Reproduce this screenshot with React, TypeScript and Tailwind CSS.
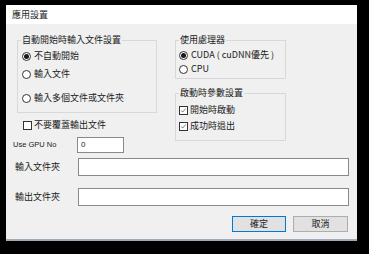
import type { ReactNode } from 'react'

const cjk = "font-['Noto_Sans_CJK_TC','Noto_Sans_CJK_SC',sans-serif]"

function Radio({ checked, children }: { checked?: boolean; children: ReactNode }) {
  return (
    <div className="flex h-[12px] items-center gap-[3px]">
      <span className="flex h-[9px] w-[9px] items-center justify-center rounded-full border border-[#333] bg-white">
        {checked && <span className="h-[5px] w-[5px] rounded-full bg-[#1a1a1a]" />}
      </span>
      <span className="leading-[12px]">{children}</span>
    </div>
  )
}

function Check({ checked, children }: { checked?: boolean; children: ReactNode }) {
  return (
    <div className="flex h-[12px] items-center gap-[2px]">
      <span className="flex h-[9px] w-[9px] items-center justify-center border border-[#333] bg-white">
        {checked && (
          <svg viewBox="0 0 9 9" className="h-[9px] w-[9px]">
            <path d="M1.5 4.4 L3.5 6.5 L7.5 1.8" fill="none" stroke="#333" strokeWidth="0.8" />
          </svg>
        )}
      </span>
      <span className="leading-[12px]">{children}</span>
    </div>
  )
}

function Group({ title, className, children }: { title: string; className: string; children: ReactNode }) {
  return (
    <fieldset className={`border border-[#d8d8d8] pl-[3px] ${className}`}>
      <legend className="px-[1px] leading-[12px]">{title}</legend>
      {children}
    </fieldset>
  )
}

export default function App() {
  return (
    <div className={`h-[254px] w-[369px] bg-black pl-[6px] pt-[5px] text-[9px] text-[#1a1a1a] ${cjk}`}>
      <div className="flex h-[236px] w-[351px] flex-col border-b-2 border-[#9fabb8]">
        <div className="flex h-[19px] items-center bg-white pl-[6px]">應用設置</div>
        <div className="flex flex-1 flex-col bg-[#f0f0f0] pl-[7px] pr-[8px] pt-[10px]">
          <div className="flex">
            <div className="flex w-[162px] flex-col">
              <Group title="自動開始時輸入文件設置" className="ml-[4px] h-[79px] w-[140px]">
                <div className="mt-[4px] flex flex-col pl-[1px]">
                  <Radio checked>不自動開始</Radio>
                  <div className="mt-[6px]">
                    <Radio>輸入文件</Radio>
                  </div>
                  <div className="mt-[12px]">
                    <Radio>輸入多個文件或文件夾</Radio>
                  </div>
                </div>
              </Group>
              <div className="ml-[10px] mt-[6px]">
                <Check>不要覆蓋輸出文件</Check>
              </div>
              <div className="mt-[6px] flex items-center">
                <span className="w-[64px] font-['Liberation_Sans',sans-serif] text-[7.5px]">Use GPU No</span>
                <div className="flex h-[16px] w-[47px] items-center border border-[#8a8a8a] bg-white pl-[3px] font-['Liberation_Sans',sans-serif] text-[8px]">
                  0
                </div>
              </div>
            </div>
            <div className="flex flex-col">
              <Group title="使用處理器" className="h-[45px] w-[111px]">
                <div className="mt-[3px] flex flex-col gap-[2px]">
                  <Radio checked>CUDA ( cuDNN優先 )</Radio>
                  <Radio>CPU</Radio>
                </div>
              </Group>
              <Group title="啟動時參數設置" className="mt-[8px] h-[54px] w-[111px]">
                <div className="mt-[5px] flex flex-col gap-[4px]">
                  <Check checked>開始時啟動</Check>
                  <Check checked>成功時退出</Check>
                </div>
              </Group>
            </div>
          </div>
          <div className="mt-[5px] flex items-center">
            <span className="w-[65px] pl-[2px]">輸入文件夾</span>
            <div className="h-[18px] flex-1 border border-[#8a8a8a] bg-white" />
          </div>
          <div className="mt-[12px] flex items-center">
            <span className="w-[65px] pl-[2px]">輸出文件夾</span>
            <div className="h-[18px] flex-1 border border-[#8a8a8a] bg-white" />
          </div>
          <div className="mt-[10px] flex justify-end gap-[7px] pr-[1px]">
            <button type="button" className="flex h-[16px] w-[54px] items-center justify-center border border-[#0078d7] bg-[#e1e1e1]">
              確定
            </button>
            <button type="button" className="flex h-[16px] w-[55px] items-center justify-center border border-[#adadad] bg-[#e1e1e1]">
              取消
            </button>
          </div>
        </div>
      </div>
    </div>
  )
}
